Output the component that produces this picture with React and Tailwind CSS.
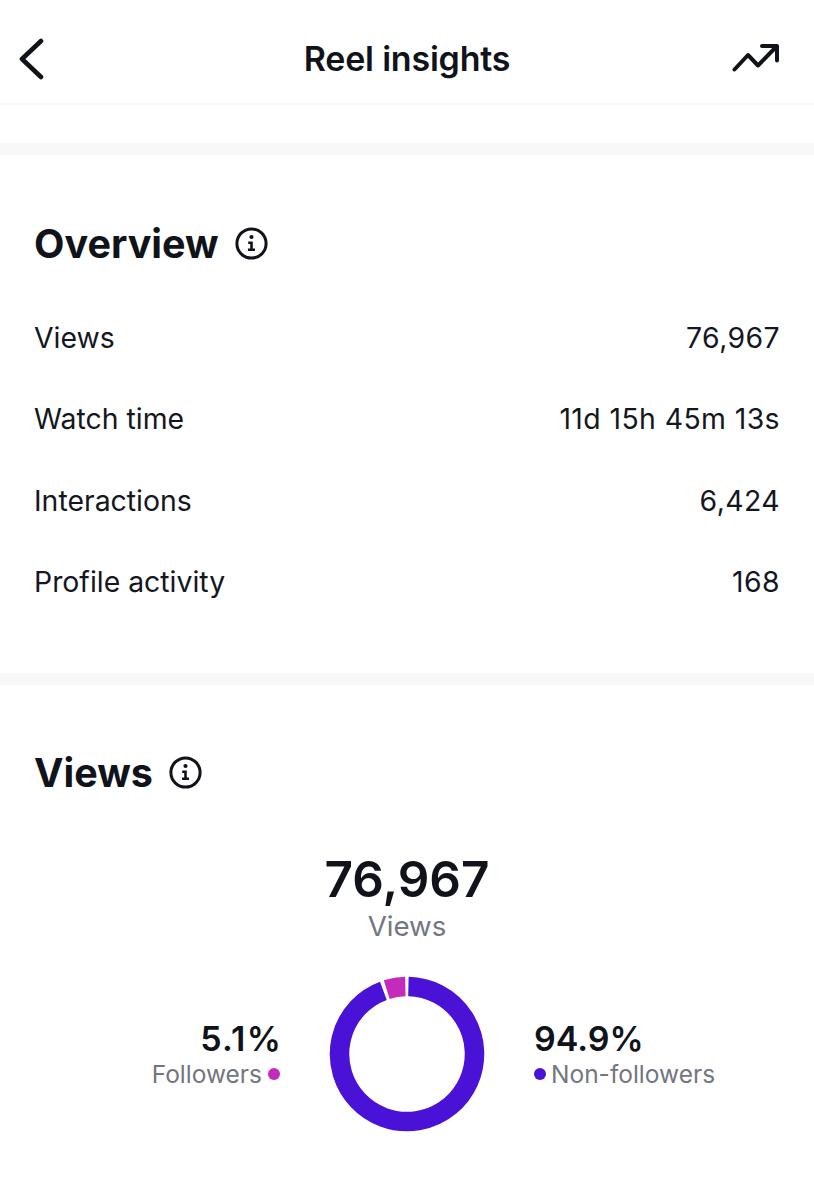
const ink = "#10131a";

function arc(r, a0, a1, cx = 80, cy = 80) {
  const p = (a) => [cx + r * Math.sin((a * Math.PI) / 180), cy - r * Math.cos((a * Math.PI) / 180)];
  const [x0, y0] = p(a0);
  const [x1, y1] = p(a1);
  const large = Math.abs(a1 - a0) > 180 ? 1 : 0;
  return `M${x0} ${y0} A${r} ${r} 0 ${large} 1 ${x1} ${y1}`;
}

function Info({ size = 33 }) {
  return (
    <svg width={size} height={size} viewBox="0 0 33 33" fill="none" className="shrink-0 -mt-[3px]">
      <circle cx="16.5" cy="16.5" r="14.6" stroke={ink} strokeWidth="3" />
      <circle cx="16.5" cy="10" r="2.1" fill={ink} />
      <path d="M13.2 14.6h4.6v7h2.2v2.4h-7v-2.4h2.2v-4.6h-2z" fill={ink} />
    </svg>
  );
}

function Row({ label, value }) {
  return (
    <div className="flex items-center justify-between h-[81.5px] text-[28.4px] text-[#14171f]">
      <span>{label}</span>
      <span className="tracking-[0.4px]">{value}</span>
    </div>
  );
}

export default function App() {
  return (
    <div className="w-[814px] h-[1200px] overflow-hidden bg-white" style={{ fontFamily: "Inter, sans-serif", color: ink }}>
      <header className="h-[105px] grid grid-cols-[1fr_auto_1fr] items-center border-b-2 border-[#f8f8f8] pl-[18px] pr-[34px] pt-[14px]">
        <svg width="28" height="42" viewBox="0 0 28 42" fill="none">
          <path d="M23 3 L4 21 L23 39" stroke={ink} strokeWidth="4.6" strokeLinecap="round" strokeLinejoin="round" />
        </svg>
        <h1 className="text-[34px] font-semibold tracking-[-0.2px] relative left-[8px]">Reel insights</h1>
        <svg width="48" height="30" viewBox="0 0 48 30" fill="none" className="justify-self-end">
          <path d="M2.5 25.5 L16 11 L26 21.5 L44 3" stroke={ink} strokeWidth="4" strokeLinecap="round" strokeLinejoin="round" />
          <path d="M30 2 H45 V16.5" stroke={ink} strokeWidth="4" strokeLinecap="round" strokeLinejoin="round" />
        </svg>
      </header>
      <div className="h-[38px]" />
      <div className="h-[12px] bg-[#f8f8f8]" />
      <section className="px-[34px] h-[518px]">
        <div className="flex items-center gap-[16.5px] pt-[66px] h-[114px]">
          <h2 className="text-[39.5px] font-bold">Overview</h2>
          <Info />
        </div>
        <div className="mt-[28.5px]">
          <Row label="Views" value="76,967" />
          <Row label="Watch time" value="11d 15h 45m 13s" />
          <Row label="Interactions" value="6,424" />
          <Row label="Profile activity" value="168" />
        </div>
      </section>
      <div className="h-[12px] bg-[#f8f8f8]" />
      <section className="px-[34px]">
        <div className="flex items-center gap-[16px] pt-[65px] h-[113px]">
          <h2 className="text-[39.5px] font-bold">Views</h2>
          <Info />
        </div>
        <div className="flex flex-col items-center mt-[53px]">
          <div className="text-[49.5px] leading-[56px] font-semibold">76,967</div>
          <div className="text-[27.7px] leading-[34px] mt-[2px] text-[#737680]">Views</div>
        </div>
      </section>
      <div className="grid grid-cols-[1fr_auto_1fr] gap-x-[50px] items-center mt-[31px]">
        <div className="flex flex-col items-end">
          <div className="text-[34px] leading-[40px] font-semibold tracking-[1.2px] -mr-[2px]">5.1%</div>
          <div className="flex items-center gap-[6px] text-[24.5px] leading-[30px] text-[#737680]">
            Followers
            <span className="w-[12px] h-[12px] rounded-full bg-[#c42bbb]" />
          </div>
        </div>
        <svg width="160" height="160" viewBox="0 0 160 160" fill="none" className="-mx-[3px]">
          <path d={arc(67.5, 1.2, 339.5)} stroke="#4a11d6" strokeWidth="19.5" />
          <path d={arc(67.5, 342.5, 358.6)} stroke="#c42bbb" strokeWidth="19.5" />
        </svg>
        <div className="flex flex-col items-start">
          <div className="text-[34px] leading-[40px] font-semibold">94.9%</div>
          <div className="flex items-center gap-[5px] text-[24.5px] leading-[30px] text-[#737680]">
            <span className="w-[12px] h-[12px] rounded-full bg-[#4a11d6]" />
            Non-followers
          </div>
        </div>
      </div>
    </div>
  );
}
